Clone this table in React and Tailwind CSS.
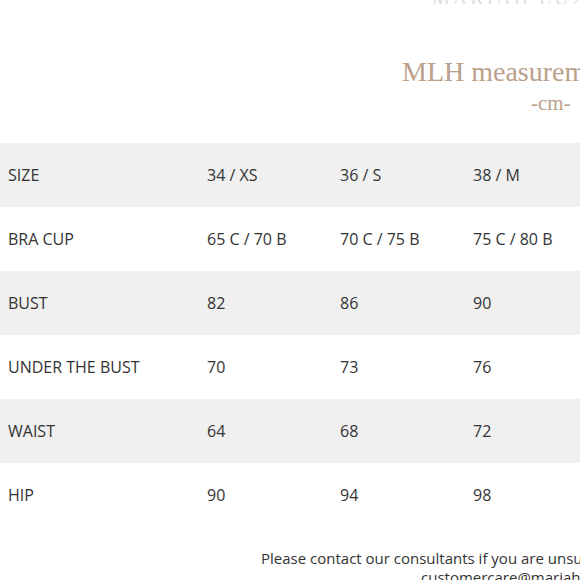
const ROWS = [
  ['SIZE', '34 / XS', '36 / S', '38 / M'],
  ['BRA CUP', '65 C / 70 B', '70 C / 75 B', '75 C / 80 B'],
  ['BUST', '82', '86', '90'],
  ['UNDER THE BUST', '70', '73', '76'],
  ['WAIST', '64', '68', '72'],
  ['HIP', '90', '94', '98'],
];

export default function App() {
  return (
    <div className="w-[580px] h-[580px] overflow-hidden bg-white relative">
      {/* tail of the heading above, cut by the crop */}
      <div className="h-[4px] overflow-hidden">
        <div className="-mt-[17px] pl-[432px] whitespace-nowrap text-[#dddddd] text-[20px] tracking-[3px]" style={{ fontFamily: '"Liberation Serif", serif' }}>
          MARIAH LUXURY HOME
        </div>
      </div>

      <div className="pt-[51px] pl-[402px] whitespace-nowrap text-[#bba08a] text-[28px] leading-[34px]" style={{ fontFamily: '"Liberation Serif", serif' }}>
        MLH measurement guide
      </div>
      <div className="pt-[1px] pl-[531px] whitespace-nowrap text-[#bba08a] text-[21px] leading-[26px]" style={{ fontFamily: '"Liberation Serif", serif' }}>
        -cm-
      </div>

      <div className="mt-[27px] text-[#333333] text-[16px]" style={{ fontFamily: '"Open Sans", sans-serif' }}>
        {ROWS.map((r, i) => (
          <div key={r[0]} className={`flex items-center h-[64px] whitespace-nowrap ${i % 2 === 0 ? 'bg-[#f0f0f0]' : 'bg-white'}`}>
            <div className="w-[207px] shrink-0 pl-[8px]">{r[0]}</div>
            <div className="w-[133px] shrink-0">{r[1]}</div>
            <div className="w-[133px] shrink-0">{r[2]}</div>
            <div className="w-[133px] shrink-0">{r[3]}</div>
          </div>
        ))}
      </div>

      <div className="pt-[22px] text-[#333333] text-[15px] leading-[19px] whitespace-nowrap" style={{ fontFamily: '"Open Sans", sans-serif' }}>
        <div className="pl-[261px]">Please contact our consultants if you are unsure of your size</div>
        <div className="pl-[421px]">customercare@mariahluxuryhome.com</div>
      </div>
    </div>
  );
}
